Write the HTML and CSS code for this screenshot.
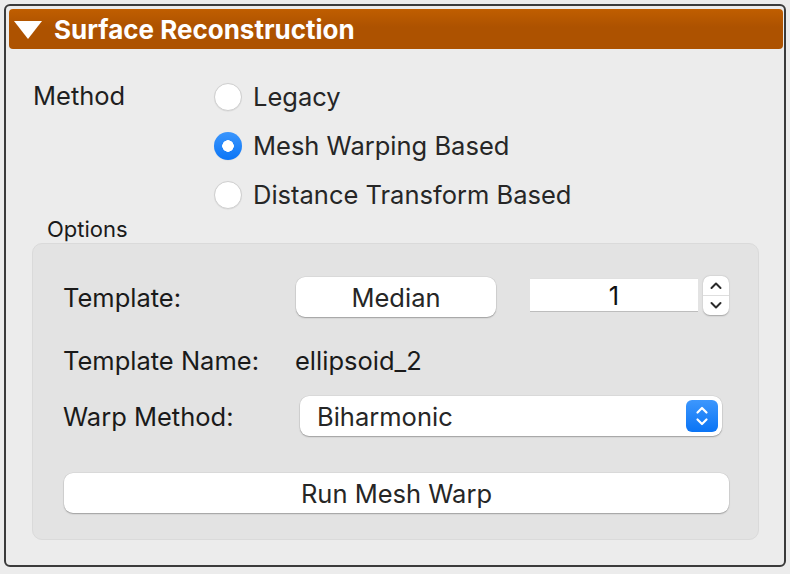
FILE: index.html
```html
<!DOCTYPE html>
<html>
<head>
<meta charset="utf-8">
<link rel="stylesheet" href="styles.css">
</head>
<body>
<div class="frame">
  <div class="header">
    <span class="tri"></span>
    <span class="title">Surface Reconstruction</span>
  </div>
  <div class="method">
    <div class="method-label">Method</div>
    <div class="radios">
      <div class="radio-row"><span class="radio"></span><span class="radio-text">Legacy</span></div>
      <div class="radio-row"><span class="radio checked"></span><span class="radio-text">Mesh Warping Based</span></div>
      <div class="radio-row"><span class="radio"></span><span class="radio-text">Distance Transform Based</span></div>
    </div>
  </div>
  <div class="options-label">Options</div>
  <div class="group">
    <div class="row row-template">
      <span class="label w-template">Template:</span>
      <div class="btn median">Median</div>
      <div class="field">1</div>
      <div class="stepper">
        <svg width="26" height="39" viewBox="0 0 26 39">
          <path d="M8.5 12 L13 7.5 L17.5 12" fill="none" stroke="#2a2a2a" stroke-width="2" stroke-linecap="round" stroke-linejoin="round"/>
          <line x1="0" y1="19.5" x2="26" y2="19.5" stroke="#dedede" stroke-width="1"/>
          <path d="M8.5 27 L13 31.5 L17.5 27" fill="none" stroke="#2a2a2a" stroke-width="2" stroke-linecap="round" stroke-linejoin="round"/>
        </svg>
      </div>
    </div>
    <div class="row row-name">
      <span class="label w-name">Template Name:</span>
      <span class="value">ellipsoid_2</span>
    </div>
    <div class="row row-warp">
      <span class="label w-warp">Warp Method:</span>
      <div class="popup">
        <span class="popup-text">Biharmonic</span>
        <span class="popup-arrows">
          <svg width="32" height="32" viewBox="0 0 32 32">
            <path d="M11.5 12.5 L16 8 L20.5 12.5" fill="none" stroke="#fff" stroke-width="2.2" stroke-linecap="round" stroke-linejoin="round"/>
            <path d="M11.5 19.5 L16 24 L20.5 19.5" fill="none" stroke="#fff" stroke-width="2.2" stroke-linecap="round" stroke-linejoin="round"/>
          </svg>
        </span>
      </div>
    </div>
    <div class="row row-run">
      <div class="btn run">Run Mesh Warp</div>
    </div>
  </div>
</div>
</body>
</html>
```

FILE: styles.css
```css
html, body {
  margin: 0;
  padding: 0;
}
body {
  background: #ececec;
  width: 790px;
  height: 574px;
  padding: 4px 0 0 4px;
  box-sizing: border-box;
  font-family: "Inter", "Liberation Sans", sans-serif;
  color: #1f1f1f;
}
.frame {
  box-sizing: border-box;
  width: 782px;
  height: 563px;
  border: 2px solid #3b3b3b;
  border-radius: 6px;
  padding: 3px 1px 0 3px;
  background: #ececec;
}
.header {
  height: 40px;
  border-radius: 4px;
  background: linear-gradient(#c05e00, #ad5200 45%, #ad5200);
  display: flex;
  align-items: center;
}
.tri {
  width: 0;
  height: 0;
  margin-left: 5px;
  margin-top: 2px;
  border-left: 14px solid transparent;
  border-right: 14px solid transparent;
  border-top: 18px solid #fff;
}
.title {
  margin-left: 12px;
  color: #fff;
  font-weight: 700;
  font-size: 26px;
}
.method {
  display: flex;
  margin-top: 23px;
  padding-left: 24px;
}
.method-label {
  width: 181px;
  font-size: 25.5px;
  line-height: 49px;
  margin-top: -1px;
}
.radio-row {
  height: 49px;
  display: flex;
  align-items: center;
}
.radio {
  box-sizing: border-box;
  width: 28px;
  height: 28px;
  border-radius: 50%;
  background: #fff;
  border: 1px solid #cfcfcf;
  box-shadow: 0 0.5px 1px rgba(0,0,0,0.08);
}
.radio.checked {
  border: none;
  background: radial-gradient(circle, #fff 0 5.5px, transparent 6px), linear-gradient(#3b96fd, #0b75f6);
}
.radio-text {
  margin-left: 11px;
  font-size: 25.5px;
  color: #262626;
}
.options-label {
  margin-top: -2px;
  padding-left: 38px;
  height: 24px;
  line-height: 24px;
  font-size: 22px;
  color: #1a1a1a;
}
.group {
  box-sizing: border-box;
  margin-top: 2px;
  margin-left: 23px;
  width: 727px;
  height: 297px;
  background: #e3e3e3;
  border: 1px solid #dadada;
  border-radius: 10px;
  padding-left: 30px;
}
.row {
  display: flex;
  align-items: center;
  height: 40px;
}
.label {
  font-size: 25.5px;
  color: #1a1a1a;
}
.w-template { width: 233px; }
.w-name { width: 232px; }
.w-warp { width: 237px; }
.row-template { margin-top: 33px; }
.row-name { margin-top: 23px; }
.row-warp { margin-top: 16px; }
.row-run { margin-top: 37px; }
.btn {
  box-sizing: border-box;
  height: 40px;
  background: #fff;
  border-radius: 9px;
  box-shadow: 0 1px 1.5px rgba(0,0,0,0.28), 0 0 0 0.5px rgba(0,0,0,0.08);
  display: flex;
  align-items: center;
  justify-content: center;
  font-size: 25.5px;
  color: #262626;
}
.median { width: 200px; }
.field {
  box-sizing: border-box;
  margin-left: 34px;
  width: 168px;
  height: 34px;
  margin-top: -4px;
  background: #fff;
  border-bottom: 1.5px solid #bdbdbd;
  border-top: 0.5px solid #e0e0e0;
  display: flex;
  align-items: center;
  justify-content: center;
  font-size: 25.5px;
  color: #111;
}
.stepper {
  margin-left: 5px;
  width: 26px;
  height: 39px;
  margin-top: -3px;
  background: #fff;
  border-radius: 7px;
  box-shadow: 0 0.5px 1.5px rgba(0,0,0,0.28);
  display: flex;
}
.value {
  font-size: 25.5px;
  color: #1a1a1a;
}
.popup {
  box-sizing: border-box;
  width: 422px;
  height: 40px;
  background: #fff;
  border-radius: 9px;
  box-shadow: 0 1px 1.5px rgba(0,0,0,0.28), 0 0 0 0.5px rgba(0,0,0,0.08);
  display: flex;
  align-items: center;
  justify-content: space-between;
  padding: 0 4px 0 17px;
}
.popup-text {
  font-size: 25.5px;
  color: #262626;
}
.popup-arrows {
  width: 32px;
  height: 32px;
  border-radius: 6px;
  background: linear-gradient(#3d97fd, #0a74f5);
  display: flex;
}
.row-run .run {
  margin-left: 1px;
  width: 665px;
}
```
